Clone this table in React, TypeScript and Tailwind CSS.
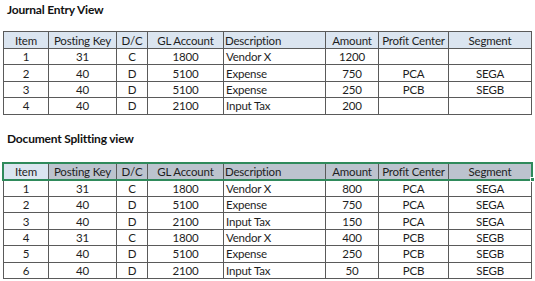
const cols = [
    { key: 'item', label: 'Item', w: 45 },
    { key: 'pk', label: 'Posting Key', w: 68 },
    { key: 'dc', label: 'D/C', w: 31 },
    { key: 'gl', label: 'GL Account', w: 76 },
    { key: 'desc', label: 'Description', w: 102 },
    { key: 'amt', label: 'Amount', w: 53 },
    { key: 'pc', label: 'Profit Center', w: 70 },
    { key: 'seg', label: 'Segment', w: 83 },
]

const journal = [
    ['1', '31', 'C', '1800', 'Vendor X', '1200', '', ''],
    ['2', '40', 'D', '5100', 'Expense', '750', 'PCA', 'SEGA'],
    ['3', '40', 'D', '5100', 'Expense', '250', 'PCB', 'SEGB'],
    ['4', '40', 'D', '2100', 'Input Tax', '200', '', ''],
]

const splitting = [
    ['1', '31', 'C', '1800', 'Vendor X', '800', 'PCA', 'SEGA'],
    ['2', '40', 'D', '5100', 'Expense', '750', 'PCA', 'SEGA'],
    ['3', '40', 'D', '2100', 'Input Tax', '150', 'PCA', 'SEGA'],
    ['4', '31', 'C', '1800', 'Vendor X', '400', 'PCB', 'SEGB'],
    ['5', '40', 'D', '5100', 'Expense', '250', 'PCB', 'SEGB'],
    ['6', '40', 'D', '2100', 'Input Tax', '50', 'PCB', 'SEGB'],
]

function Sheet({ rows, selected }: { rows: string[][]; selected?: boolean }) {
    return (
        <div className="relative w-fit">
            <table className="table-fixed border-collapse whitespace-nowrap text-[11.5px] leading-[13px] tracking-[-0.2px] text-[#1e1e1e]">
                <colgroup>
                    {cols.map((c) => (
                        <col key={c.key} style={{ width: c.w }} />
                    ))}
                </colgroup>
                <thead>
                    <tr className="h-[17px]">
                        {cols.map((c, i) => (
                            <th
                                key={c.key}
                                className={
                                    'overflow-hidden border border-[#5a5a5a] px-[1px] py-0 font-normal ' +
                                    (c.key === 'desc' ? 'text-left ' : 'text-center ') +
                                    (selected && i > 0 ? 'bg-[#bcc3ce]' : 'bg-[#dbe5f0]')
                                }
                            >
                                {c.label}
                            </th>
                        ))}
                    </tr>
                </thead>
                <tbody>
                    {rows.map((r) => (
                        <tr key={r[0]} className="h-[16.4px]">
                            {r.map((v, i) => (
                                <td
                                    key={i}
                                    className={
                                        'overflow-hidden border border-[#5a5a5a] px-[2px] py-0 ' +
                                        (cols[i].key === 'desc' ? 'text-left' : 'text-center')
                                    }
                                >
                                    {v}
                                </td>
                            ))}
                        </tr>
                    ))}
                </tbody>
            </table>
            {selected && (
                <>
                    <div className="pointer-events-none absolute left-[-1px] right-[-1px] top-[-1px] h-[19px] border-2 border-[#2f8a5b]" />
                    <div className="absolute right-[-3px] top-[14px] h-[5px] w-[5px] border border-white bg-[#2f8a5b]" />
                </>
            )}
        </div>
    )
}

export default function App() {
    return (
        <div className="h-[281px] w-[535px] bg-white pl-[3px] pt-[2px] font-['Lato',sans-serif]">
            <h2 className="ml-[4px] h-[16px] text-[12px] font-bold leading-[16px] tracking-[-0.2px] text-[#111]">
                Journal Entry View
            </h2>
            <div className="mt-[13px]">
                <Sheet rows={journal} />
            </div>
            <h2 className="ml-[4px] mt-[16px] h-[16px] text-[12px] font-bold leading-[16px] tracking-[-0.2px] text-[#111]">
                Document Splitting view
            </h2>
            <div className="mt-[16px]">
                <Sheet rows={splitting} selected />
            </div>
        </div>
    )
}
